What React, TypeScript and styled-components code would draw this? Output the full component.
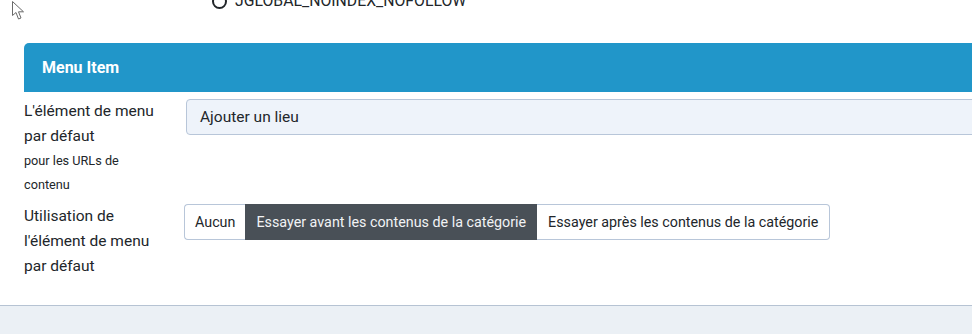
import React from 'react';
import styled, { createGlobalStyle } from 'styled-components';

const GlobalStyle = createGlobalStyle`
  html, body {
    margin: 0;
    padding: 0;
    background-color: #ebf0f5;
    font-family: Roboto, 'Liberation Sans', Arial, sans-serif;
    color: #22262a;
  }
`;

const Page = styled.div`
  position: relative;
  width: 972px;
  height: 334px;
  overflow: hidden;
`;

const Card = styled.div`
  background-color: #ffffff;
  border-bottom: 1px solid #b6c3d3;
  height: 306px;
  box-sizing: border-box;
  padding-left: 24px;
  display: flex;
  flex-direction: column;
`;

const TopRow = styled.div`
  height: 43px;
  display: flex;
  align-items: flex-start;
  padding-left: 188px;
`;

const RadioLine = styled.div`
  display: flex;
  align-items: center;
  gap: 8px;
  margin-top: -9px;
  font-size: 15.8px;
  line-height: 20px;
`;

const RadioRing = styled.span`
  width: 11px;
  height: 11px;
  border: 2px solid #22262a;
  border-radius: 50%;
`;

const Cursor = styled.svg`
  position: absolute;
  left: 11px;
  top: 0;
`;

const Header = styled.div`
  height: 49px;
  width: 1000px;
  background-color: #2196c9;
  border-top-left-radius: 5px;
  display: flex;
  align-items: center;
  padding-left: 18px;
  box-sizing: border-box;
  color: #ffffff;
  font-size: 16px;
  font-weight: 700;
`;

const Field = styled.div<{ top: number }>`
  display: flex;
  align-items: flex-start;
  margin-top: ${(p) => p.top}px;
`;

const Label = styled.div`
  width: 160px;
  font-size: 15.5px;
  line-height: 25px;
`;

const Small = styled.div`
  font-size: 12.7px;
  line-height: 24px;
`;

const Input = styled.div`
  margin-left: 2px;
  flex: 1;
  height: 36px;
  box-sizing: border-box;
  margin-right: -20px;
  background-color: #eef3fa;
  border: 1px solid #b8c6d9;
  border-radius: 4px;
  display: flex;
  align-items: center;
  padding-left: 13px;
  font-size: 15.5px;
`;

const Group = styled.div`
  display: flex;
  height: 36px;
`;

const Toggle = styled.div<{ active?: boolean; pos: 'first' | 'mid' | 'last' }>`
  display: flex;
  align-items: center;
  padding: 0 ${(p) => (p.pos === 'first' ? 10 : 11)}px;
  font-size: 14.3px;
  box-sizing: border-box;
  background-color: ${(p) => (p.active ? '#495057' : '#ffffff')};
  color: ${(p) => (p.active ? '#f1f3f5' : '#22262a')};
  border: 1px solid ${(p) => (p.active ? '#495057' : '#b8c6d9')};
  border-left-width: ${(p) => (p.pos === 'first' ? 1 : 0)}px;
  border-right-width: ${(p) => (p.pos === 'last' ? 1 : 0)}px;
  border-radius: ${(p) =>
    p.pos === 'first' ? '4px 0 0 4px' : p.pos === 'last' ? '0 4px 4px 0' : '0'};
`;

export default function App(): JSX.Element {
  return (
    <Page>
      <GlobalStyle />
      <Card>
        <TopRow>
          <RadioLine>
            <RadioRing />
            <span>JGLOBAL_NOINDEX_NOFOLLOW</span>
          </RadioLine>
        </TopRow>
        <Header>Menu Item</Header>
        <Field top={7}>
          <Label>
            L'élément de menu
            <br />
            par défaut
            <Small>
              pour les URLs de
              <br />
              contenu
            </Small>
          </Label>
          <Input>Ajouter un lieu</Input>
        </Field>
        <Field top={7}>
          <Label>
            Utilisation de
            <br />
            l'élément de menu
            <br />
            par défaut
          </Label>
          <Group>
            <Toggle pos="first">Aucun</Toggle>
            <Toggle pos="mid" active>
              Essayer avant les contenus de la catégorie
            </Toggle>
            <Toggle pos="last">Essayer après les contenus de la catégorie</Toggle>
          </Group>
        </Field>
      </Card>
      <Cursor width="16" height="22" viewBox="0 0 16 22">
        <path
          d="M1.5 1.5 L1.5 15.5 L5 12.5 L7.5 19 L10 18 L7.5 11.8 L12.5 11.8 Z"
          fill="#ffffff"
          stroke="#6a6a6a"
          strokeWidth="1"
          strokeLinejoin="round"
        />
      </Cursor>
    </Page>
  );
}
